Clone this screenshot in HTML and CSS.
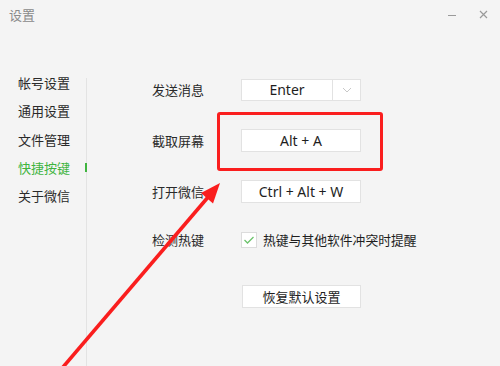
FILE: index.html
```html
<!DOCTYPE html>
<html lang="zh">
<head>
<meta charset="utf-8">
<link rel="stylesheet" href="styles.css">
</head>
<body>
<div class="window">
  <header class="titlebar">
    <span class="title">设置</span>
    <div class="controls">
      <span class="ctl-min"></span>
      <svg class="ctl-close" width="9" height="9" viewBox="0 0 9 9"><path d="M1 1 L8 8 M8 1 L1 8" stroke="#9a9a9a" stroke-width="1.2"/></svg>
    </div>
  </header>
  <div class="body">
    <nav class="sidebar">
      <div class="nav-item">帐号设置</div>
      <div class="nav-item">通用设置</div>
      <div class="nav-item">文件管理</div>
      <div class="nav-item active">快捷按键<span class="indicator"></span></div>
      <div class="nav-item">关于微信</div>
    </nav>
    <main class="content">
      <div class="row r1">
        <span class="label">发送消息</span>
        <div class="box select">
          <span class="sel-value">Enter</span>
          <span class="sel-arrow"><svg width="10" height="6" viewBox="0 0 10 6"><path d="M1 1 L5 5 L9 1" fill="none" stroke="#c8c8c8" stroke-width="1"/></svg></span>
        </div>
      </div>
      <div class="row r2">
        <span class="label">截取屏幕</span>
        <div class="box">Alt + A</div>
      </div>
      <div class="row r3">
        <span class="label">打开微信</span>
        <div class="box">Ctrl + Alt + W</div>
      </div>
      <div class="row r4">
        <span class="label">检测热键</span>
        <span class="checkbox"><svg width="12" height="10" viewBox="0 0 12 10"><path d="M1.5 5 L4.5 8 L10.5 2" fill="none" stroke="#6cc36c" stroke-width="1.3"/></svg></span>
        <span class="check-text">热键与其他软件冲突时提醒</span>
      </div>
      <div class="row r5">
        <div class="box button">恢复默认设置</div>
      </div>
    </main>
  </div>
  <div class="highlight"></div>
  <svg class="arrow" width="500" height="366" viewBox="0 0 500 366">
    <line x1="52" y1="380" x2="209" y2="196" stroke="#fa1e1e" stroke-width="3.6"/>
    <polygon points="220,183 213,203.5 201,193" fill="#fa1e1e"/>
  </svg>
</div>
</body>
</html>
```

FILE: styles.css
```css
* { box-sizing: border-box; }
html, body {
  margin: 0;
  padding: 0;
  width: 500px;
  height: 366px;
  overflow: hidden;
  background: #f4f4f4;
}
.window {
  position: relative;
  width: 500px;
  height: 366px;
  font-family: "Noto Sans", "Noto Sans CJK SC", sans-serif;
  font-size: 13px;
  color: #2a2a2a;
}
.titlebar {
  height: 69px;
  display: flex;
  justify-content: space-between;
  align-items: flex-start;
  padding: 5px 12px 0 9px;
}
.title {
  color: #8a8a8a;
  font-family: "Noto Sans CJK SC", sans-serif;
  font-size: 13px;
  line-height: 20px;
}
.controls {
  display: flex;
  align-items: center;
  gap: 23px;
  padding-top: 5px;
}
.ctl-min {
  width: 8px;
  height: 1px;
  background: #9a9a9a;
  margin-top: 1px;
}
.ctl-close { display: block; }
.body {
  display: flex;
  height: 297px;
}
.sidebar {
  width: 87px;
  padding-left: 18px;
  position: relative;
  font-family: "Noto Sans CJK SC", sans-serif;
}
.sidebar::after {
  content: "";
  position: absolute;
  left: 86px;
  top: 9px;
  bottom: 0;
  width: 1px;
  background: #e3e3e3;
}
.nav-item {
  height: 28.3px;
  line-height: 28px;
  position: relative;
}
.nav-item.active { color: #3fb43f; }
.indicator {
  position: absolute;
  left: 67px;
  top: 9px;
  width: 2px;
  height: 9px;
  background: #3fb43f;
  z-index: 1;
}
.content {
  padding-left: 65px;
  padding-top: 9px;
  font-family: "Noto Sans CJK SC", sans-serif;
}
.row {
  display: flex;
  align-items: center;
  height: 23px;
}
.r2, .r3 { margin-top: 28px; }
.r4 { margin-top: 25px; }
.r5 { margin-top: 34px; padding-left: 90px; }
.label {
  width: 89px;
  flex: none;
}
.box {
  width: 120px;
  height: 23px;
  background: #fff;
  border: 1px solid #e2e2e2;
  display: flex;
  align-items: center;
  justify-content: center;
  font-family: "Noto Sans", "Noto Sans CJK SC", sans-serif;
  font-size: 14px;
  color: #1e1e1e;
}
.r1 .box { height: 22px; }
.select { justify-content: flex-start; }
.sel-value {
  width: 91px;
  text-align: center;
  border-right: 1px solid #e2e2e2;
  height: 100%;
  line-height: 20px;
}
.sel-arrow {
  flex: 1;
  display: flex;
  justify-content: center;
  align-items: center;
}
.sel-arrow svg { display: block; }
.checkbox {
  width: 16px;
  height: 16px;
  background: #fff;
  border: 1px solid #dcdcdc;
  display: flex;
  align-items: center;
  justify-content: center;
  flex: none;
}
.check-text {
  margin-left: 6px;
  color: #1e1e1e;
  font-size: 12.8px;
}
.button {
  width: 119px;
  font-family: "Noto Sans CJK SC", sans-serif;
  font-size: 13px;
}
.highlight {
  position: absolute;
  left: 217px;
  top: 112px;
  width: 166px;
  height: 59px;
  border: 3px solid #fa1e1e;
  border-radius: 3px;
}
.arrow {
  position: absolute;
  left: 0;
  top: 0;
  pointer-events: none;
}
```
